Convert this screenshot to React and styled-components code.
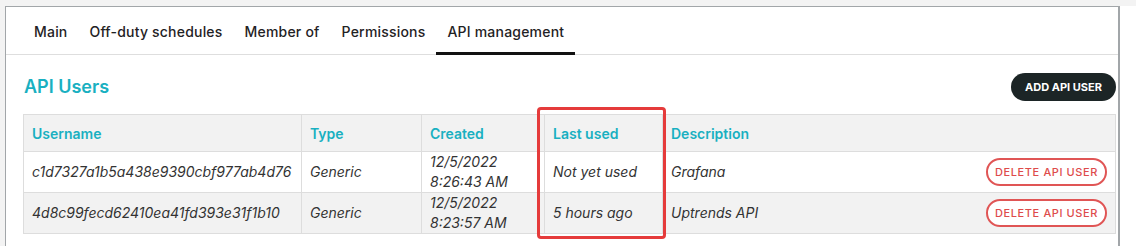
import React from "react";
import styled, {createGlobalStyle} from "styled-components";

const GlobalStyle = createGlobalStyle`
  html, body {
    margin: 0;
    padding: 0;
    background: #f3f3f3;
    font-family: Inter, "Noto Sans", sans-serif;
    color: #1f1f1f;
  }
`;

const Page = styled.div`
  display: flex;
  padding-top: 6px;
  padding-left: 5px;
  height: 240px;
  overflow: hidden;
`;

const Gutter = styled.div`
  width: 16px;
  flex-shrink: 0;
  background: #fff;
`;

const Card = styled.div`
  flex: 1;
  background: #fff;
  border: 1px solid #a2a6a9;
  border-right: 2px solid #a2a6a9;
  border-bottom: none;
`;

const TabBar = styled.div`
  display: flex;
  padding-left: 17px;
  height: 47px;
  border-bottom: 1px solid #dedede;
`;

const Tab = styled.div`
  display: flex;
  align-items: center;
  padding: 1px 11px 0;
  font-size: 14px;
  font-weight: 500;
  letter-spacing: 0.2px;
  color: #1f2224;
  box-shadow: ${({active}) => (active ? "inset 0 -3px 0 #111" : "none")};
  margin-bottom: ${({active}) => (active ? "-1px" : "0")};
`;

const Section = styled.div`
  padding: 18px 2px 0 17px;
`;

const HeaderRow = styled.div`
  display: flex;
  justify-content: space-between;
  align-items: center;
  height: 28px;
  margin-bottom: 13px;
`;

const Title = styled.h2`
  margin: 0 0 0 1px;
  font-size: 18px;
  font-weight: 600;
  color: #19b0c1;
  position: relative;
  top: -1px;
`;

const PillButton = styled.button`
  font-family: inherit;
  border-radius: 16px;
  cursor: pointer;
  text-transform: uppercase;
  font-size: 11px;
  height: 28px;
  display: inline-flex;
  align-items: center;
  justify-content: center;
`;

const AddButton = styled(PillButton)`
  width: 105px;
  background: #1c2526;
  color: #fff;
  border: none;
  font-weight: 700;
`;

const DeleteButton = styled(PillButton)`
  width: 121px;
  background: #fff;
  color: #de4b4b;
  border: 2px solid #e05555;
  font-weight: 500;
  letter-spacing: 0.6px;
`;

const TableWrap = styled.div`
  position: relative;
`;

const Table = styled.table`
  width: 1093px;
  table-layout: fixed;
  border-collapse: collapse;
  font-size: 14px;
`;

const Th = styled.th`
  height: 36px;
  text-align: left;
  padding: 0 8px;
  background: #f2f2f2;
  color: #19b0c1;
  font-weight: 600;
  border: 1px solid #dddddd;
`;

const Tr = styled.tr`
  background: ${({striped}) => (striped ? "#f2f2f2" : "#fff")};
`;

const Td = styled.td`
  height: 40px;
  padding: 0 8px;
  line-height: 20px;
  font-style: italic;
  color: #333;
  border: 1px solid #dddddd;
`;

const DescCell = styled.div`
  display: flex;
  justify-content: space-between;
  align-items: center;
`;

const Highlight = styled.div`
  position: absolute;
  left: 514px;
  top: -7px;
  width: 123px;
  height: 126px;
  border: 3px solid #e53b3b;
  border-radius: 4px;
  pointer-events: none;
`;

const tabs = ["Main", "Off-duty schedules", "Member of", "Permissions", "API management"];

const users = [
  {name: "c1d7327a1b5a438e9390cbf977ab4d76", type: "Generic", date: "12/5/2022", time: "8:26:43 AM", last: "Not yet used", desc: "Grafana"},
  {name: "4d8c99fecd62410ea41fd393e31f1b10", type: "Generic", date: "12/5/2022", time: "8:23:57 AM", last: "5 hours ago", desc: "Uptrends API"},
];

export default function App() {
  return (
    <>
      <GlobalStyle />
      <Page>
        <Card>
          <TabBar>
            {tabs.map((t) => (
              <Tab key={t} active={t === "API management"}>{t}</Tab>
            ))}
          </TabBar>
          <Section>
            <HeaderRow>
              <Title>API Users</Title>
              <AddButton>Add API user</AddButton>
            </HeaderRow>
            <TableWrap>
              <Table>
                <colgroup>
                  <col style={{width: 278}} />
                  <col style={{width: 120}} />
                  <col style={{width: 123}} />
                  <col style={{width: 118}} />
                  <col />
                </colgroup>
                <thead>
                  <tr>
                    <Th>Username</Th>
                    <Th>Type</Th>
                    <Th>Created</Th>
                    <Th>Last used</Th>
                    <Th>Description</Th>
                  </tr>
                </thead>
                <tbody>
                  {users.map((u, i) => (
                    <Tr key={u.name} striped={i % 2 === 1}>
                      <Td>{u.name}</Td>
                      <Td>{u.type}</Td>
                      <Td>{u.date}<br />{u.time}</Td>
                      <Td>{u.last}</Td>
                      <Td>
                        <DescCell>
                          <span>{u.desc}</span>
                          <DeleteButton>Delete API user</DeleteButton>
                        </DescCell>
                      </Td>
                    </Tr>
                  ))}
                </tbody>
              </Table>
              <Highlight />
            </TableWrap>
          </Section>
        </Card>
        <Gutter />
      </Page>
    </>
  );
}
